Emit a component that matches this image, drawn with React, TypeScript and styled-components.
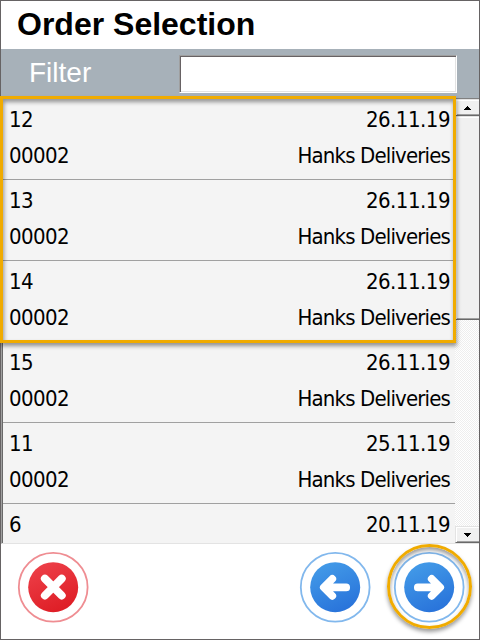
import React from "react";
import styled, { createGlobalStyle, css } from "styled-components";

const GlobalStyle = createGlobalStyle`
  * { box-sizing: border-box; }
  body { margin: 0; background: #fff; }
`;

const Screen = styled.main`
  position: relative;
  display: flex;
  flex-direction: column;
  width: 480px;
  height: 640px;
  border: 1px solid #666364;
  background: #fff;
`;

const Title = styled.h1`
  flex: 0 0 48px;
  margin: 0;
  padding-left: 16px;
  font: bold 32px/46px "Liberation Sans", Arial, sans-serif;
  color: #000;
`;

const FilterBar = styled.label`
  flex: 0 0 49px;
  display: flex;
  align-items: flex-start;
  background: #a7b1b9;
`;

const FilterLabel = styled.span`
  width: 178px;
  padding-left: 28px;
  font: 28px/48px "Liberation Sans", Arial, sans-serif;
  color: #fff;
`;

const FilterInput = styled.input`
  width: 278px;
  height: 38px;
  margin: 6px 0 0;
  padding: 0 6px;
  border: 1px solid;
  border-color: #9f9f9f #fff #fff #9f9f9f;
  outline: none;
  background: #fff;
  box-shadow: inset 1px 1px #676264, inset -1px -1px #e3e3e3;
  font: 26px "Liberation Sans", Arial, sans-serif;
`;

const ListArea = styled.section`
  flex: 0 0 446px;
  height: 446px;
  min-height: 0;
  display: flex;
  overflow: hidden;
  border-left: 1px solid #a0a0a0;
  border-top: 1px solid #808080;
  border-bottom: 1px solid #e3e3e3;
  box-shadow: inset 1px 0 #696969;
  padding-left: 1px;
`;

const Rows = styled.ul`
  flex: 0 0 452px;
  height: 444px;
  margin: 0;
  padding: 0;
  overflow: hidden;
  list-style: none;
  background: #f4f4f4;
`;

const Row = styled.li`
  display: grid;
  grid-template-columns: auto 1fr;
  grid-template-rows: 36px 36px;
  height: 81px;
  padding: 3px 5px 0 6px;
  border-bottom: 1px solid #a0a0a0;
  font: 22px/36px "DejaVu Sans Condensed", "DejaVu Sans", Tahoma, sans-serif;
  font-stretch: condensed;
  letter-spacing: -0.6px;
  color: #000;
`;

const Cell = styled.span<{ $end?: boolean; $name?: boolean }>`
  white-space: nowrap;
  ${(p) => p.$end && css`text-align: right; letter-spacing: -0.5px;`}
  ${(p) => p.$name && css`letter-spacing: -0.85px;`}
`;

const Scrollbar = styled.div`
  flex: 1;
  display: flex;
  flex-direction: column;
  height: 444px;
  background: repeating-conic-gradient(#fff 0% 25%, #eee 0% 50%) 0 0 / 2px 2px;
`;

const raised = css`
  background: #f0f0f0;
  border: 1px solid;
  border-color: #e3e3e3 #696969 #696969 #e3e3e3;
  box-shadow: inset 1px 1px #fff, inset 0 -1px #a0a0a0;
`;

const ScrollButton = styled.button`
  flex: 0 0 17px;
  display: flex;
  align-items: center;
  justify-content: center;
  padding: 0;
  ${raised}
  border-right: 0;
`;

const Thumb = styled.div`
  height: 204px;
  margin-bottom: auto;
  ${raised}
  border-right: 0;
`;

const Footer = styled.footer`
  flex: 1;
  display: flex;
  align-items: flex-start;
  padding: 7px 14px 0 16px;
`;

const RoundButton = styled.button<{ $push?: boolean; $gap?: number }>`
  width: 72px;
  height: 72px;
  padding: 0;
  border: 0;
  background: none;
  margin-left: ${(p) => (p.$push ? "auto" : `${p.$gap ?? 0}px`)};
  svg { display: block; }
`;

const highlight = css`
  position: absolute;
  border: 3px solid #f0ab00;
  pointer-events: none;
`;

const RowsHighlight = styled.div`
  ${highlight}
  left: -1px;
  top: 95px;
  width: 456px;
  height: 247px;
  box-shadow: 1px 3px 4px rgba(0, 0, 0, 0.4), inset 1px 3px 4px rgba(0, 0, 0, 0.4);
`;

const ButtonHighlight = styled.div`
  ${highlight}
  left: 386px;
  top: 543px;
  width: 85px;
  height: 85px;
  border-radius: 50%;
  box-shadow: 0 3px 4px rgba(0, 0, 0, 0.4), inset 0 3px 4px rgba(0, 0, 0, 0.4);
`;

interface Order {
  number: string;
  date: string;
  code?: string;
  customer?: string;
}

const hanks = { code: "00002", customer: "Hanks Deliveries" };

const orders: Order[] = [
  { number: "12", date: "26.11.19", ...hanks },
  { number: "13", date: "26.11.19", ...hanks },
  { number: "14", date: "26.11.19", ...hanks },
  { number: "15", date: "26.11.19", ...hanks },
  { number: "11", date: "25.11.19", ...hanks },
  { number: "6", date: "20.11.19" },
];

type Kind = "cancel" | "back" | "next";

const glyphs: Record<Kind, string> = {
  cancel: "M27.9 27.7 44.7 44.5M44.7 27.7 27.9 44.5",
  back: "M47.2 36H26M33.3 27.5 24.8 36 33.3 44.5",
  next: "M24.8 36H46M38.7 27.5 47.2 36 38.7 44.5",
};

function RoundIcon({ kind }: { kind: Kind }) {
  const red = kind === "cancel";
  const id = `fill-${kind}`;
  return (
    <svg width="72" height="72" viewBox="0 0 72 72" fill="none">
      <defs>
        <linearGradient id={id} x1="0.25" y1="0" x2="0.7" y2="1">
          <stop stopColor={red ? "#ed4049" : "#439be8"} />
          <stop offset="1" stopColor={red ? "#de1c24" : "#2872da"} />
        </linearGradient>
      </defs>
      <circle cx="36.2" cy="36.2" r="34.4" stroke={red ? "#ef8d92" : "#82b8ed"} strokeWidth="1.8" />
      <circle cx="36.2" cy="36.2" r="25" fill={`url(#${id})`} />
      <path
        d={glyphs[kind]}
        transform={red ? undefined : "translate(0 .4)"}
        stroke="#fff"
        strokeWidth={red ? 8 : 7.7}
        strokeLinecap="round"
        strokeLinejoin="round"
      />
    </svg>
  );
}

function Triangle({ down }: { down?: boolean }) {
  return (
    <svg width="7" height="4" viewBox="0 0 7 4" shapeRendering="crispEdges">
      <path d={down ? "M0 0h7v1H6v1H5v1H4v1H3V3H2V2H1V1H0z" : "M3 0h1v1h1v1h1v1h1v1H0V3h1V2h1V1h1z"} />
    </svg>
  );
}

export default function App() {
  return (
    <>
      <GlobalStyle />
      <Screen>
        <Title>Order Selection</Title>
        <FilterBar>
          <FilterLabel>Filter</FilterLabel>
          <FilterInput />
        </FilterBar>
        <ListArea>
          <Rows>
            {orders.map((order) => (
              <Row key={order.number}>
                <Cell>{order.number}</Cell>
                <Cell $end>{order.date}</Cell>
                {order.code && <Cell>{order.code}</Cell>}
                {order.customer && <Cell $end $name>{order.customer}</Cell>}
              </Row>
            ))}
          </Rows>
          <Scrollbar>
            <ScrollButton aria-label="Scroll up"><Triangle /></ScrollButton>
            <Thumb />
            <ScrollButton aria-label="Scroll down"><Triangle down /></ScrollButton>
          </Scrollbar>
        </ListArea>
        <Footer>
          <RoundButton aria-label="Cancel"><RoundIcon kind="cancel" /></RoundButton>
          <RoundButton $push aria-label="Back"><RoundIcon kind="back" /></RoundButton>
          <RoundButton $gap={22} aria-label="Next"><RoundIcon kind="next" /></RoundButton>
        </Footer>
        <RowsHighlight />
        <ButtonHighlight />
      </Screen>
    </>
  );
}
